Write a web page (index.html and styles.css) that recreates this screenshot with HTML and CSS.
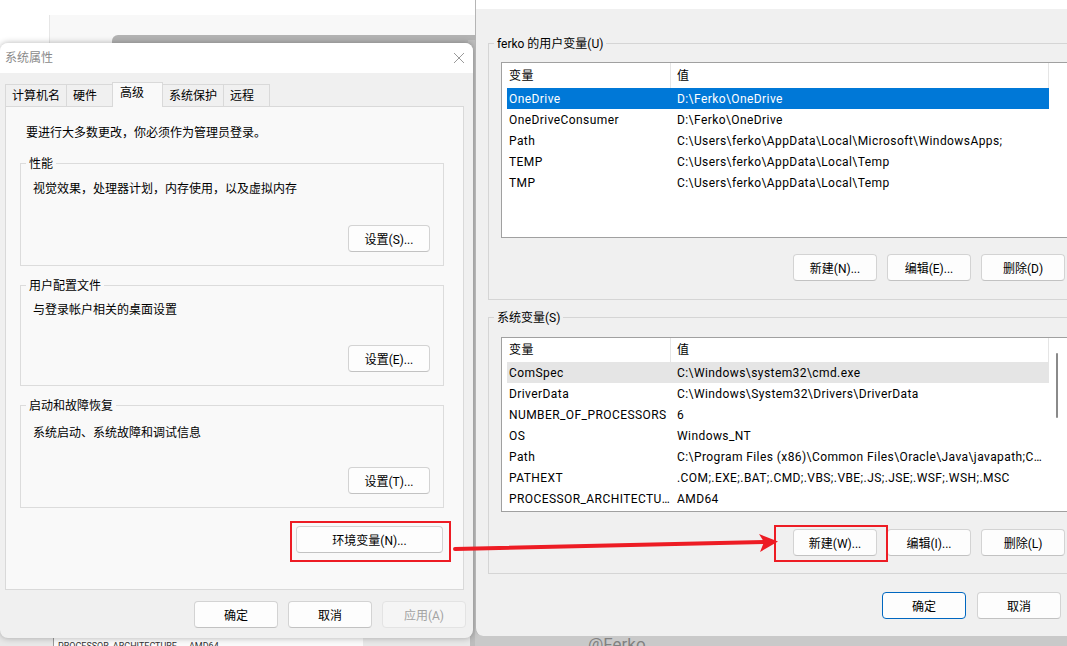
FILE: index.html
```html
<!DOCTYPE html>
<html lang="zh-CN">

<head>
    <meta charset="UTF-8">
    <meta name="viewport" content="width=device-width, initial-scale=1.0">
    <title>系统属性 - 环境变量</title>
    <link rel="stylesheet" href="styles.css">
</head>

<body>
    <div class="desk">
        <!-- windows behind -->
        <div class="back-panel"></div>
        <div class="back-bar"></div>
        <div class="back-gap"></div>
        <div class="back-bottom">
            <div class="back-list">PROCESSOR_ARCHITECTURE<span class="back-val">AMD64</span></div>
        </div>
        <div class="back-right"></div>

        <!-- 系统属性 -->
        <div class="win sysprop">
            <div class="titlebar">
                <span class="title">系统属性</span>
                <svg class="close" width="12" height="12" viewBox="0 0 12 12">
                    <path d="M1 1 L11 11 M11 1 L1 11" stroke="#9a9a9a" stroke-width="1" fill="none" />
                </svg>
            </div>
            <div class="sp-body">
                <div class="tabs">
                    <div class="tab">计算机名</div>
                    <div class="tab">硬件</div>
                    <div class="tab active">高级</div>
                    <div class="tab">系统保护</div>
                    <div class="tab">远程</div>
                </div>
                <div class="tabpanel">
                    <p class="note">要进行大多数更改，你必须作为管理员登录。</p>
                    <div class="group first">
                        <div class="legend">性能</div>
                        <p class="desc">视觉效果，处理器计划，内存使用，以及虚拟内存</p>
                        <button class="btn">设置(S)...</button>
                    </div>
                    <div class="group short">
                        <div class="legend">用户配置文件</div>
                        <p class="desc">与登录帐户相关的桌面设置</p>
                        <button class="btn">设置(E)...</button>
                    </div>
                    <div class="group last">
                        <div class="legend">启动和故障恢复</div>
                        <p class="desc">系统启动、系统故障和调试信息</p>
                        <button class="btn">设置(T)...</button>
                    </div>
                    <button class="btn env">环境变量(N)...</button>
                </div>
                <div class="sp-foot">
                    <button class="btn">确定</button>
                    <button class="btn">取消</button>
                    <button class="btn" disabled>应用(A)</button>
                </div>
            </div>
        </div>

        <!-- 环境变量 -->
        <div class="win envvars">
            <div class="ev-top"></div>
            <div class="ev-body">
                <div class="vgroup">
                    <div class="legend">ferko 的用户变量(U)</div>
                    <div class="list list1">
                        <div class="cols">
                            <div class="row head"><div class="cell name">变量</div><div class="cell val">值</div></div>
                            <div class="row sel"><div class="cell name">OneDrive</div><div class="cell val">D:\Ferko\OneDrive</div></div>
                            <div class="row"><div class="cell name">OneDriveConsumer</div><div class="cell val">D:\Ferko\OneDrive</div></div>
                            <div class="row"><div class="cell name">Path</div><div class="cell val">C:\Users\ferko\AppData\Local\Microsoft\WindowsApps;</div></div>
                            <div class="row"><div class="cell name">TEMP</div><div class="cell val">C:\Users\ferko\AppData\Local\Temp</div></div>
                            <div class="row"><div class="cell name">TMP</div><div class="cell val">C:\Users\ferko\AppData\Local\Temp</div></div>
                        </div>
                    </div>
                    <div class="vbtns">
                        <button class="btn">新建(N)...</button>
                        <button class="btn">编辑(E)...</button>
                        <button class="btn">删除(D)</button>
                    </div>
                </div>

                <div class="vgroup">
                    <div class="legend">系统变量(S)</div>
                    <div class="list list2">
                        <div class="cols">
                            <div class="row head"><div class="cell name">变量</div><div class="cell val">值</div></div>
                            <div class="row hover"><div class="cell name">ComSpec</div><div class="cell val">C:\Windows\system32\cmd.exe</div></div>
                            <div class="row"><div class="cell name">DriverData</div><div class="cell val">C:\Windows\System32\Drivers\DriverData</div></div>
                            <div class="row"><div class="cell name">NUMBER_OF_PROCESSORS</div><div class="cell val">6</div></div>
                            <div class="row"><div class="cell name">OS</div><div class="cell val">Windows_NT</div></div>
                            <div class="row"><div class="cell name">Path</div><div class="cell val">C:\Program Files (x86)\Common Files\Oracle\Java\javapath;C:\WINDOWS\system32</div></div>
                            <div class="row"><div class="cell name">PATHEXT</div><div class="cell val">.COM;.EXE;.BAT;.CMD;.VBS;.VBE;.JS;.JSE;.WSF;.WSH;.MSC</div></div>
                            <div class="row"><div class="cell name">PROCESSOR_ARCHITECTURE</div><div class="cell val">AMD64</div></div>
                        </div>
                        <div class="vscroll"><div class="thumb"></div></div>
                    </div>
                    <div class="vbtns">
                        <button class="btn">新建(W)...</button>
                        <button class="btn">编辑(I)...</button>
                        <button class="btn">删除(L)</button>
                    </div>
                </div>

                <div class="ev-foot">
                    <button class="btn default">确定</button>
                    <button class="btn">取消</button>
                </div>
            </div>
        </div>

        <!-- annotations -->
        <div class="redbox rb1"></div>
        <div class="redbox rb2"></div>
        <svg class="arrow" width="1067" height="646" viewBox="0 0 1067 646">
            <path d="M455 549 L764 542" stroke="#ed1c24" stroke-width="4" stroke-linecap="round" fill="none" />
            <path d="M759 534 L778 541.5 L760 552 L764 542 Z" fill="#ed1c24" />
        </svg>
        <div class="watermark">@Ferko</div>
    </div>
</body>

</html>
```

FILE: styles.css
```css
html,
body {
    width: 1067px;
    height: 646px;
    margin: 0;
    padding: 0;
    overflow: hidden;
    background-color: #fff;
    color: #000;
    font-size: 12px;
    font-family: Roboto, "Noto Sans CJK SC", sans-serif;
}

p {
    margin: 0;
}

.desk {
    position: relative;
    width: 1067px;
    height: 646px;
    overflow: hidden;
}

/* windows in the background */

.back-panel {
    position: absolute;
    left: 49px;
    top: 15px;
    width: 426px;
    height: 40px;
    background-color: #f8f8f8;
    border-left: 1px solid #e6e6e6;
}

.back-bar {
    position: absolute;
    left: 112px;
    top: 35px;
    width: 363px;
    height: 20px;
    background-color: #b3b3b3;
    border-radius: 6px 0 0 0;
}

.back-gap {
    position: absolute;
    left: 468px;
    top: 40px;
    width: 10px;
    height: 606px;
    background-color: #bdbdbd;
}

.back-bottom {
    position: absolute;
    left: 0;
    top: 620px;
    width: 470px;
    height: 26px;
    background-color: #e8e8e8;
}

.back-list {
    box-sizing: border-box;
    margin-left: 53px;
    width: 310px;
    height: 100%;
    padding: 21px 0 0 4px;
    border-left: 1px solid #9a9a9a;
    background-color: #fafafa;
    font-size: 9px;
    line-height: 11px;
    color: #333;
}

.back-val {
    margin-left: 12px;
}

.back-right {
    position: absolute;
    left: 475px;
    top: 620px;
    width: 592px;
    height: 26px;
    background-color: #c9c9c9;
}

/* dialogs */

.win {
    position: absolute;
    box-sizing: border-box;
    background-color: #f0f0f0;
}

.btn {
    box-sizing: border-box;
    width: 84px;
    height: 27px;
    padding: 0;
    border: 1px solid #d3d3d3;
    border-bottom-color: #c2c2c2;
    border-radius: 4px;
    background-color: #fdfdfd;
    color: #000;
    font: inherit;
    outline: none;
}

.btn:disabled {
    color: #a3a3a3;
    background-color: #f5f5f5;
    border-color: #e3e3e3;
}

.btn.default {
    border-color: #0067c0;
}

.legend {
    align-self: flex-start;
    margin: -8px 0 0 5px;
    padding: 0 3px;
    line-height: 16px;
    white-space: nowrap;
}

/* 系统属性 */

.sysprop {
    left: 0;
    top: 43px;
    width: 473px;
    height: 595px;
    border-radius: 8px;
    overflow: hidden;
    box-shadow: 0 0 6px rgba(0, 0, 0, 0.3);
}

.titlebar {
    height: 30px;
    display: flex;
    align-items: center;
    justify-content: space-between;
    padding: 0 8px 0 5px;
    background-color: #fff;
}

.title {
    color: #8a8a8a;
    line-height: 14px;
}

.sp-body {
    padding: 9px 0 0 5px;
}

.tabs {
    position: relative;
    z-index: 1;
    display: flex;
    align-items: flex-start;
    height: 24px;
}

.tab {
    box-sizing: border-box;
    min-width: 47px;
    height: 22px;
    margin-top: 2px;
    margin-right: -1px;
    padding: 1px 6px 0;
    line-height: 21px;
    border: 1px solid #d9d9d9;
    border-bottom: none;
    background-color: #f0f0f0;
}

.tab.active {
    min-width: 51px;
    height: 25px;
    margin-top: 0;
    padding: 0 7px;
    background-color: #f9f9f9;
}

.tabpanel {
    box-sizing: border-box;
    width: 459px;
    height: 484px;
    padding: 18px 19px 0 14px;
    display: flex;
    flex-direction: column;
    border: 1px solid #d9d9d9;
    background-color: #f9f9f9;
}

.note {
    margin-left: 6px;
    line-height: 16px;
}

.group {
    box-sizing: border-box;
    height: 103px;
    margin-top: 19px;
    display: flex;
    flex-direction: column;
    border: 1px solid #dcdcdc;
}

.group.first {
    margin-top: 22px;
}

.group.short {
    height: 101px;
}

.group .legend {
    background-color: #f9f9f9;
}

.desc {
    margin: 8px 0 0 12px;
    line-height: 16px;
}

.group.first .desc {
    margin-top: 9px;
}

.group.last .desc {
    margin-top: 11px;
}

.group .btn {
    align-self: flex-end;
    width: 82px;
    margin: auto 13px 13px 0;
}

.btn.env {
    align-self: flex-end;
    width: 147px;
    margin: 18px 1px 0 0;
}

.sp-foot {
    display: flex;
    justify-content: flex-end;
    gap: 10px;
    padding: 11px 7px 0 0;
}

/* 环境变量 */

.envvars {
    left: 475px;
    top: 0;
    width: 620px;
    height: 636px;
    border-left: 1px solid #b5b5b5;
    border-radius: 0 0 0 8px;
}

.ev-top {
    height: 9px;
    background-color: #fff;
}

.ev-body {
    padding-left: 12px;
}

.vgroup {
    box-sizing: border-box;
    width: 610px;
    height: 257px;
    margin-top: 34px;
    display: flex;
    flex-direction: column;
    border: 1px solid #d5d5d5;
}

.vgroup+.vgroup {
    margin-top: 17px;
}

.vgroup .legend {
    background-color: #f0f0f0;
}

.list {
    box-sizing: border-box;
    width: 600px;
    margin: 10px 0 0 12px;
    padding-left: 5px;
    display: flex;
    border: 1px solid #a0a0a0;
    background-color: #fff;
}

.list1 {
    height: 176px;
}

.list2 {
    height: 175px;
    margin-top: 11px;
}

.cols {
    width: 542px;
}

.row {
    display: flex;
    height: 21px;
    line-height: 20px;
}

.row.head {
    height: 24px;
    line-height: 23px;
}

.list1 .row.head {
    height: 25px;
    line-height: 24px;
}

.cell {
    flex: none;
    box-sizing: border-box;
    padding-top: 1px;
    white-space: nowrap;
    overflow: hidden;
    text-overflow: ellipsis;
    letter-spacing: 0.42px;
}

.cell.name {
    width: 164px;
    padding-left: 2px;
    padding-right: 0;
}

.cell.val {
    width: 378px;
    padding-left: 6px;
    padding-right: 4px;
}

.head .cell {
    border-right: 1px solid #e5e5e5;
}

.row.sel {
    background-color: #0078d7;
    color: #fff;
}

.row.hover {
    background-color: #e5e5e5;
}

.vscroll {
    width: 18px;
}

.thumb {
    width: 2px;
    height: 65px;
    margin: 15px 0 0 7px;
    border-radius: 1px;
    background-color: #8a8a8a;
}

.vbtns {
    width: 576px;
    display: flex;
    justify-content: flex-end;
    gap: 10px;
    margin-top: 16px;
}

.list2+.vbtns {
    margin-top: 17px;
}

.ev-foot {
    width: 573px;
    display: flex;
    justify-content: flex-end;
    gap: 11px;
    margin-top: 18px;
}

/* annotations */

.redbox {
    position: absolute;
    box-sizing: border-box;
    border: 2px solid #ed1c24;
}

.rb1 {
    left: 290px;
    top: 521px;
    width: 161px;
    height: 41px;
}

.rb2 {
    left: 774px;
    top: 525px;
    width: 114px;
    height: 37px;
}

.arrow {
    position: absolute;
    left: 0;
    top: 0;
    pointer-events: none;
}

.watermark {
    position: absolute;
    left: 588px;
    top: 634px;
    font-size: 17px;
    line-height: 20px;
    color: rgba(110, 110, 110, 0.8);
}
```
